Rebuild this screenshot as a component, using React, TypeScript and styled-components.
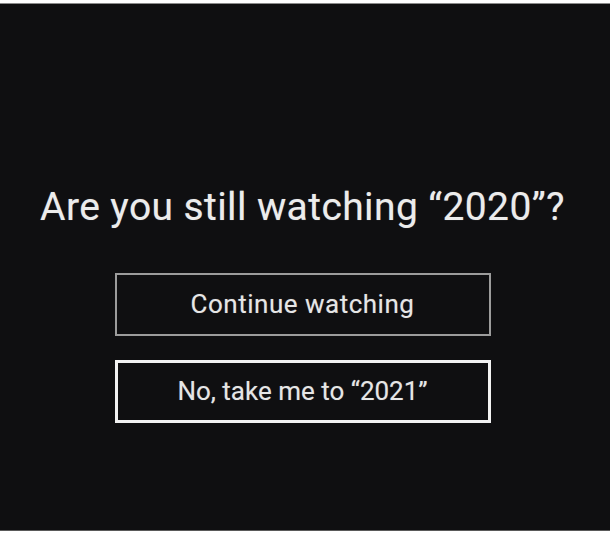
import React from 'react';
import styled, { createGlobalStyle } from 'styled-components';

const GlobalStyle = createGlobalStyle`
  html, body {
    margin: 0;
    padding: 0;
    background: #ffffff;
  }
  body {
    font-family: Roboto, "Liberation Sans", Arial, sans-serif;
  }
`;

const Screen = styled.div`
  margin-top: 3px;
  height: 528px;
  box-sizing: border-box;
  border-top: 1px solid #8a8a8a;
  border-bottom: 1px solid #5a5a5a;
  background: #0f0f11;
  display: flex;
  flex-direction: column;
  align-items: center;
  padding-top: 180px;
  padding-right: 5px;
`;

const Title = styled.h1`
  margin: 0 0 43px;
  font-size: 39px;
  line-height: 46px;
  font-weight: 400;
  color: #ececec;
  letter-spacing: 0.4px;
  white-space: nowrap;
  text-shadow: 0 0 1px rgba(255, 255, 255, 0.35);
`;

const Options = styled.div`
  display: flex;
  flex-direction: column;
  gap: 24px;
`;

const Option = styled.button<{ $focused?: boolean }>`
  width: 376px;
  height: 63px;
  box-sizing: border-box;
  background: transparent;
  border: ${({ $focused }) => ($focused ? '3px solid #f2f2f2' : '2px solid #9c9c9c')};
  color: #e6e6e6;
  font-family: Roboto, "Liberation Sans", Arial, sans-serif;
  font-size: 26px;
  font-weight: 400;
  letter-spacing: ${({ $focused }) => ($focused ? '0' : '0.5px')};
  display: flex;
  align-items: center;
  justify-content: center;
  padding: 0 0 2px;
  cursor: pointer;
  text-shadow: 0 0 1px rgba(255, 255, 255, 0.3);
`;

const App: React.FC = () => (
  <>
    <GlobalStyle />
    <Screen>
      <Title>Are you still watching “2020”?</Title>
      <Options>
        <Option>Continue watching</Option>
        <Option $focused>No, take me to “2021”</Option>
      </Options>
    </Screen>
  </>
);

export default App;
